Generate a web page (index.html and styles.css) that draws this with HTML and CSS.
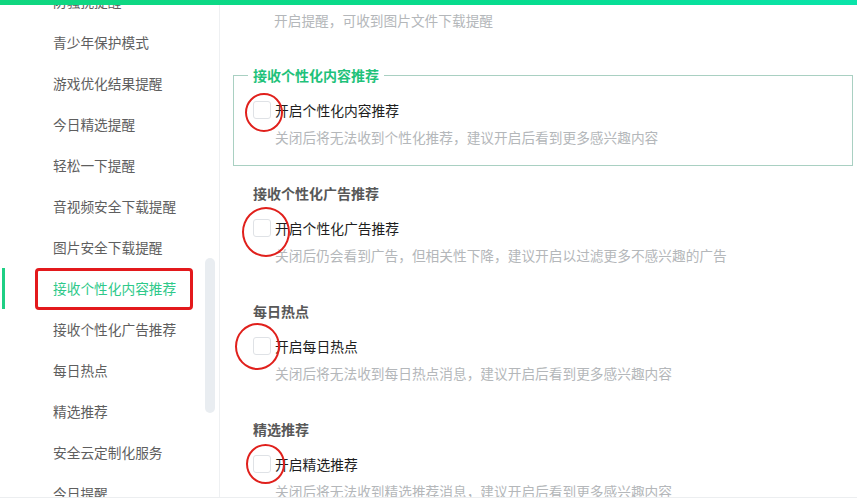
FILE: index.html
```html
<!DOCTYPE html>
<html lang="zh-CN">
<head>
<meta charset="utf-8">
<title>设置</title>
<link rel="stylesheet" href="styles.css">
</head>
<body>
<div class="topbar"></div>
<div class="layout">
  <aside class="sidebar">
    <ul class="menu">
      <li>防骚扰提醒</li>
      <li>青少年保护模式</li>
      <li>游戏优化结果提醒</li>
      <li>今日精选提醒</li>
      <li>轻松一下提醒</li>
      <li>音视频安全下载提醒</li>
      <li>图片安全下载提醒</li>
      <li class="active">接收个性化内容推荐<span class="mark-rect"></span></li>
      <li>接收个性化广告推荐</li>
      <li>每日热点</li>
      <li>精选推荐</li>
      <li>安全云定制化服务</li>
      <li>今日提醒</li>
    </ul>
    <div class="scroll-thumb"></div>
  </aside>
  <main class="main">
    <p class="prev-desc">开启提醒，可收到图片文件下载提醒</p>
    <fieldset class="group">
      <legend class="group-title">接收个性化内容推荐</legend>
      <div class="row">
        <span class="checkbox"></span><span class="label">开启个性化内容推荐</span>
        <span class="circle circle-1"></span>
      </div>
      <p class="desc">关闭后将无法收到个性化推荐，建议开启后看到更多感兴趣内容</p>
    </fieldset>
    <section class="section first">
      <h3 class="title">接收个性化广告推荐</h3>
      <div class="row">
        <span class="checkbox"></span><span class="label">开启个性化广告推荐</span>
        <span class="circle circle-2"></span>
      </div>
      <p class="desc">关闭后仍会看到广告，但相关性下降，建议开启以过滤更多不感兴趣的广告</p>
    </section>
    <section class="section">
      <h3 class="title">每日热点</h3>
      <div class="row">
        <span class="checkbox"></span><span class="label">开启每日热点</span>
        <span class="circle circle-3"></span>
      </div>
      <p class="desc">关闭后将无法收到每日热点消息，建议开启后看到更多感兴趣内容</p>
    </section>
    <section class="section">
      <h3 class="title">精选推荐</h3>
      <div class="row">
        <span class="checkbox"></span><span class="label">开启精选推荐</span>
        <span class="circle circle-4"></span>
      </div>
      <p class="desc">关闭后将无法收到精选推荐消息，建议开启后看到更多感兴趣内容</p>
    </section>
  </main>
</div>
</body>
</html>
```
FILE: styles.css
```css
html, body {
  margin: 0;
  padding: 0;
  background: #ffffff;
  font-family: "Noto Sans CJK SC", "Noto Sans", "Liberation Sans", sans-serif;
}

.topbar {
  height: 5px;
  background: linear-gradient(90deg, #10d67f 0%, #06dc8e 60%, #0ae4aa 100%);
}

.layout {
  display: flex;
  height: 492px;
  overflow: hidden;
  border-bottom: 1px solid #eceef0;
}

/* sidebar */
.sidebar {
  position: relative;
  flex: none;
  width: 217px;
  margin-left: 2px;
  border-right: 1px solid #eef0f2;
  overflow: hidden;
}

.menu {
  list-style: none;
  margin: -24px 0 0;
  padding: 0;
}

.menu li {
  position: relative;
  height: 41px;
  line-height: 41px;
  padding-left: 48px;
  border-left: 3px solid transparent;
  font-size: 13.7px;
  color: #5e5e5e;
  white-space: nowrap;
}

.menu li.active {
  border-left-color: #1fcf84;
  color: #2ec98a;
}

.mark-rect {
  position: absolute;
  left: 30px;
  top: 0;
  width: 158px;
  height: 42px;
  box-sizing: border-box;
  border: 3px solid #e3191c;
  border-radius: 4px;
}

.scroll-thumb {
  position: absolute;
  right: 4px;
  top: 253px;
  width: 10px;
  height: 155px;
  border-radius: 5px;
  background: #e9edf1;
}

/* main */
.main {
  flex: 1;
  min-width: 0;
  padding: 0 4px 0 13px;
  overflow: hidden;
}

.prev-desc {
  margin: 5px 0 0;
  padding-left: 41px;
  line-height: 20px;
  font-size: 13.7px;
  color: #b4b7ba;
}

.group {
  margin: 35px 0 0;
  padding: 0 0 18px 19px;
  border: 1px solid #a9d0c2;
  min-width: 0;
}

.group-title {
  margin-left: -5px;
  padding: 0 5px;
  line-height: 20px;
  font-size: 14px;
  font-weight: bold;
  color: #1fc27a;
}

.section {
  margin-top: 36px;
  padding-left: 20px;
}

.section.first {
  margin-top: 17px;
}

.title {
  margin: 0;
  line-height: 20px;
  font-size: 14px;
  font-weight: bold;
  color: #585858;
}

.row {
  position: relative;
  display: flex;
  align-items: center;
  height: 20px;
  margin-top: 15px;
}

.checkbox {
  flex: none;
  width: 18px;
  height: 18px;
  box-sizing: border-box;
  border: 1px solid #dfe2e6;
  border-radius: 3px;
  background: #fff;
  margin-right: 4px;
}

.label {
  font-size: 13.8px;
  line-height: 20px;
  color: #1e1e1e;
  white-space: nowrap;
}

.desc {
  margin: 7px 0 0 22px;
  line-height: 20px;
  font-size: 13.7px;
  color: #b4b7ba;
  white-space: nowrap;
}

/* red annotation circles */
.circle {
  position: absolute;
  box-sizing: border-box;
  border: 2.5px solid #e0201c;
  border-radius: 50%;
}

.circle-1 { left: -8px;  top: -7px;  width: 38px; height: 39px; }
.circle-2 { left: -11px; top: -11px; width: 48px; height: 50px; }
.circle-3 { left: -18px; top: -13px; width: 45px; height: 47px; }
.circle-4 { left: -7px;  top: -10px; width: 39px; height: 40px; }
```
